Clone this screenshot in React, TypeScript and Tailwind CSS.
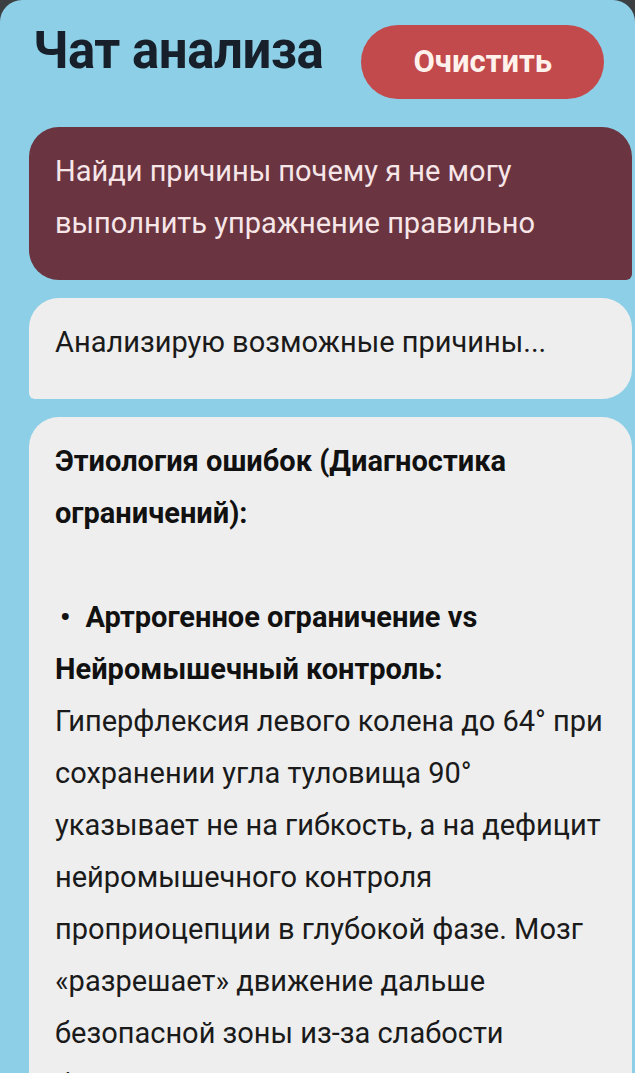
import React from "react";

export default function App() {
  return (
    <div
      className="h-screen w-full overflow-hidden bg-[#3c3f42]"
      style={{ fontFamily: "Roboto, 'Noto Sans', sans-serif" }}
    >
      <div className="h-full rounded-t-[22px] bg-[#8dcfe6] pl-[29px] pr-[3px] pt-[25px]">
        <header className="flex items-start">
          <h1 className="ml-[4px] text-[51px] font-bold leading-[51px] tracking-[-0.5px] text-[#17202a]">
            Чат анализа
          </h1>
          <button className="ml-[38px] flex h-[74px] w-[243px] items-center justify-center rounded-full bg-[#c34a4c] text-[31px] font-bold text-[#fff2ec]">
            Очистить
          </button>
        </header>

        <div className="mt-[28px] flex flex-col gap-[18px]">
          <div className="rounded-[30px] rounded-br-[6px] bg-[#6a3440] pb-[31px] pl-[26px] pr-[16px] pt-[18px] text-[29px] leading-[52px] text-[#f7e6e8]">
            Найди причины почему я не могу
            <br />
            выполнить упражнение правильно
          </div>

          <div className="rounded-[30px] rounded-bl-[6px] bg-[#eeeeee] pb-[31px] pl-[26px] pr-[16px] pt-[18px] text-[29px] leading-[52px] text-[#1a1a1a]">
            Анализирую возможные причины...
          </div>

          <div className="rounded-t-[30px] bg-[#eeeeee] pb-[31px] pl-[26px] pr-[16px] pt-[18px] text-[29px] leading-[52px] text-[#1a1a1a]">
            <p className="font-bold text-[#111111]">
              Этиология ошибок (Диагностика
              <br />
              ограничений):
            </p>
            <p>&nbsp;</p>
            <p>
              <span className="font-bold text-[#111111]">
                <span className="ml-[5px] mr-[15px]">•</span>Артрогенное ограничение vs
                <br />
                Нейромышечный контроль:
              </span>
              <br />
              Гиперфлексия левого колена до 64° при
              <br />
              сохранении угла туловища 90°
              <br />
              указывает не на гибкость, а на дефицит
              <br />
              нейромышечного контроля
              <br />
              проприоцепции в глубокой фазе. Мозг
              <br />
              «разрешает» движение дальше
              <br />
              безопасной зоны из-за слабости
              <br />
              большой ягодичной мышцы.
            </p>
          </div>
        </div>
      </div>
    </div>
  );
}
